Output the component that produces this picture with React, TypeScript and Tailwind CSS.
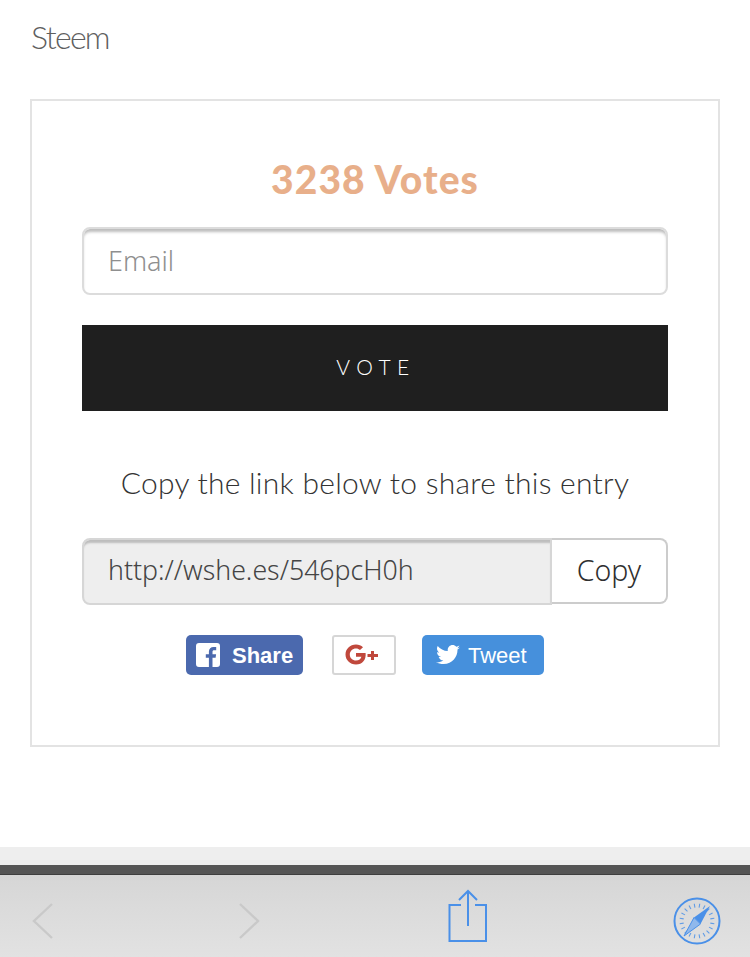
import React from "react";

const Back = () => (
  <svg width="24" height="38" viewBox="0 0 24 38" fill="none" stroke="#c9c9c9" strokeWidth="2.4">
    <path d="M21 2 L3 19 L21 36" />
  </svg>
);
const Forward = () => (
  <svg width="24" height="38" viewBox="0 0 24 38" fill="none" stroke="#c9c9c9" strokeWidth="2.4">
    <path d="M3 2 L21 19 L3 36" />
  </svg>
);
const ShareIcon = () => (
  <svg width="40" height="54" viewBox="0 0 40 54" fill="none" stroke="#4a90e8" strokeWidth="2">
    <path d="M13 16 H1.5 V52 H38 V16 H27" />
    <path d="M20 2 V37" />
    <path d="M11 11 L20 2 L29 11" />
  </svg>
);
const Compass = () => {
  const ticks = Array.from({ length: 20 }, (_, i) => i * 18);
  return (
    <svg width="48" height="48" viewBox="0 0 48 48" fill="none">
      <circle cx="24" cy="24" r="22.5" stroke="#4a90e8" strokeWidth="2" />
      {ticks.map((a) => (
        <line key={a} x1="24" y1="6.5" x2="24" y2="10.5" stroke="#4a90e8" strokeWidth="1.1" strokeOpacity="0.85" transform={`rotate(${a + 9} 24 24)`} />
      ))}
      <path d="M37 9 L27.5 27 L21 20.5 Z" fill="#4a90e8" />
      <path d="M11 39 L21 20.5 L27.5 27 Z" fill="#8fb8ec" stroke="#4a90e8" strokeWidth="1" />
    </svg>
  );
};
const FbIcon = () => (
  <svg width="24" height="24" viewBox="0 0 24 24">
    <path fill="#fff" fillRule="evenodd" d="M3 0 H21 A3 3 0 0 1 24 3 V21 A3 3 0 0 1 21 24 H16.5 V14.8 H19.6 L20.1 11.2 H16.5 V8.9 C16.5 7.9 16.8 7.2 18.3 7.2 H20.2 V4 C19.9 4 18.8 3.9 17.5 3.9 C14.8 3.9 12.9 5.6 12.9 8.6 V11.2 H9.8 V14.8 H12.9 V24 H3 A3 3 0 0 1 0 21 V3 A3 3 0 0 1 3 0 Z" />
  </svg>
);
const GPlus = () => (
  <svg width="34" height="22" viewBox="0 0 34 22">
    <path fill="#c0483c" d="M11 9 H20.6 C21.3 15.8 17.4 20.5 11 20.5 C5 20.5 0.5 16 0.5 10.5 C0.5 5 5 0.5 11 0.5 C13.8 0.5 16.2 1.5 18 3.2 L15 6.1 C14 5.1 12.7 4.4 11 4.4 C7.5 4.4 4.8 7.1 4.8 10.5 C4.8 13.9 7.5 16.6 11 16.6 C14 16.6 15.9 15 16.4 12.7 H11 Z" />
    <path fill="#c0483c" d="M26 7 H29 V10 H33 V13 H29 V16 H26 V13 H22.5 V10 H26 Z" />
  </svg>
);
const TwitterIcon = () => (
  <svg width="24" height="20" viewBox="0 0 24 20">
    <path fill="#fff" d="M24 2.4c-.9.4-1.8.7-2.8.8 1-.6 1.8-1.6 2.2-2.7-1 .6-2 1-3.1 1.2C19.3.7 18 0 16.6 0c-2.7 0-4.9 2.2-4.9 4.9 0 .4 0 .8.1 1.1C7.7 5.8 4.1 3.9 1.7.9c-.4.7-.7 1.6-.7 2.5 0 1.7.9 3.2 2.2 4.1-.8 0-1.6-.2-2.2-.6v.1c0 2.4 1.7 4.4 3.9 4.8-.4.1-.8.2-1.3.2-.3 0-.6 0-.9-.1.6 2 2.4 3.4 4.6 3.4-1.7 1.3-3.8 2.1-6.1 2.1-.4 0-.8 0-1.2-.1C2.2 18.3 4.8 19.1 7.5 19.1c9.1 0 14-7.5 14-14v-.6c1-.7 1.8-1.5 2.5-2.1z" />
  </svg>
);

export default function App() {
  return (
    <div className="w-[750px] h-[957px] flex flex-col bg-white overflow-hidden font-['Lato',sans-serif]">
      <div className="h-[99px] shrink-0 pl-[31px] pt-[18px]">
        <div className="text-[32px] leading-[38px] font-light text-[#5f5f5f] tracking-[-1.7px]">Steem</div>
      </div>

      <div className="mx-[30px] h-[648px] shrink-0 border-2 border-[#e3e3e3] px-[50px] flex flex-col">
        <div className="pt-[55px] h-[126px] shrink-0 text-center text-[39px] leading-[46px] font-black text-[#e8af8a] tracking-[1.05px]">
          3238 Votes
        </div>
        <div className="h-[68px] shrink-0 rounded-[8px] border-2 border-[#dcdcdc] shadow-[inset_0_4px_3px_-1px_#bdbdbd] pl-[24px] flex items-center text-[27px] font-light text-[#8f8f8f] font-['Noto_Sans',sans-serif]">
          Email
        </div>
        <div className="mt-[30px] h-[86px] shrink-0 bg-[#1f1f1f] flex items-center justify-center pb-[3px] pl-[2px] text-white text-[21px] font-light tracking-[6.5px]">
          VOTE
        </div>
        <div className="mt-[50px] h-[44px] shrink-0 flex items-center justify-center pb-[2px] text-[30px] font-light text-[#333333] tracking-[0.25px]">
          Copy the link below to share this entry
        </div>
        <div className="mt-[33px] h-[67px] shrink-0 flex font-['Noto_Sans',sans-serif] text-[27px]">
          <div className="w-[470px] h-[67px] rounded-l-[8px] border-2 border-[#d6d6d6] bg-[#eeeeee] shadow-[inset_0_4px_2px_-1px_#bdbdbd] pl-[24px] pb-[2px] flex items-center text-[#444444] text-[26.7px] font-light">
            http://wshe.es/546pcH0h
          </div>
          <div className="w-[116px] h-[66px] rounded-r-[8px] border-2 border-l-0 border-[#cccccc] bg-white flex items-center justify-center pb-[2px] text-[#2f2f2f] font-light text-[28.5px]">
            Copy
          </div>
        </div>
        <div className="mt-[30px] h-[40px] shrink-0 flex justify-center pr-[20px] font-['Liberation_Sans',sans-serif] font-bold text-[22px] text-white">
          <div className="w-[117px] h-[40px] rounded-[5px] bg-[#4b69ae] flex items-center pl-[10px] gap-[12px]">
            <FbIcon />
            <span>Share</span>
          </div>
          <div className="ml-[29px] w-[64px] h-[40px] rounded-[3px] border-2 border-[#d6d6d6] bg-white flex items-center justify-center pr-[4px]">
            <GPlus />
          </div>
          <div className="ml-[26px] w-[122px] h-[40px] rounded-[5px] bg-[#4690dc] flex items-center pl-[14px] gap-[8px]">
            <TwitterIcon />
            <span className="font-normal">Tweet</span>
          </div>
        </div>
      </div>

      <div className="h-[100px] shrink-0 bg-white" />
      <div className="h-[18px] shrink-0 bg-[#eeeeee]" />
      <div className="h-[10px] shrink-0 bg-[#555555] border-b border-[#3f3f3f]" />
      <div className="h-[82px] shrink-0 bg-gradient-to-b from-[#d6d6d6] to-[#e2e2e2] flex items-center">
        <div className="ml-[31px] mt-[10px]"><Back /></div>
        <div className="ml-[182px] mt-[10px]"><Forward /></div>
        <div className="ml-[187px]"><ShareIcon /></div>
        <div className="ml-[185px] mt-[10px]"><Compass /></div>
      </div>
    </div>
  );
}
